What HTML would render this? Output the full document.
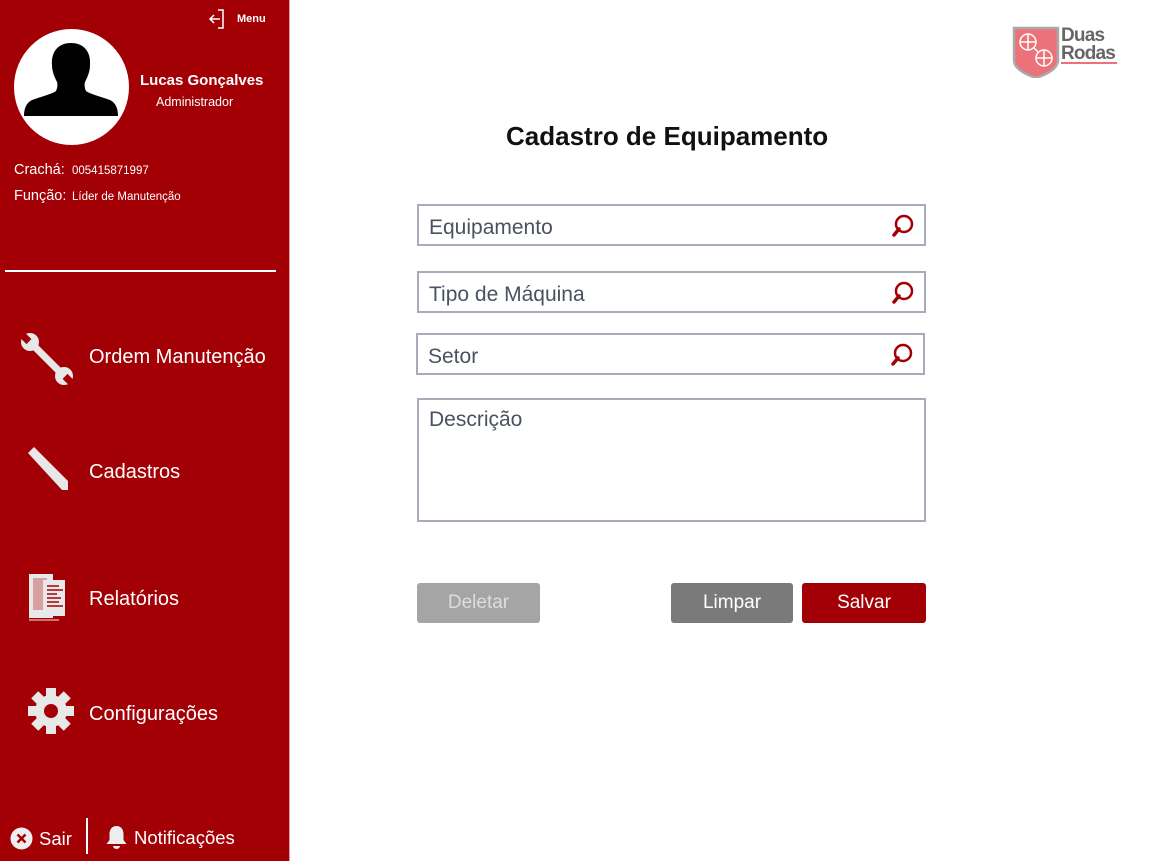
<!DOCTYPE html>
<html><head><meta charset="utf-8">
<style>
*{margin:0;padding:0;box-sizing:border-box}
body{width:1150px;height:861px;overflow:hidden;background:#fff;font-family:"Liberation Sans",sans-serif;position:relative}
.side{position:absolute;left:0;top:0;width:289px;height:861px;background:#a30006;color:#fff}
.abs{position:absolute}
.field{position:absolute;left:417px;width:509px;height:42px;border:2px solid #a7adb8;color:#4a5260;font-size:21px;padding:10px 10px 0}
.field svg{position:absolute;right:10px;top:7px}
.btn{position:absolute;top:583px;height:40px;border-radius:3px;color:#fff;font-size:19px;text-align:center;line-height:40px}
.nav{position:absolute;left:89px;font-size:20px;color:#fff}
</style></head><body>
<div class="side">
  <svg class="abs" style="left:207px;top:8px" width="20" height="22" viewBox="0 0 20 22"><path d="M11 2h5v18h-5" fill="none" stroke="#fff" stroke-width="1.5"/><path d="M13 11H3M7 7l-4 4 4 4" fill="none" stroke="#fff" stroke-width="1.5"/></svg>
  <div class="abs" style="left:237px;top:13px;font-size:11px;font-weight:bold">Menu</div>
  <div class="abs" style="left:14px;top:29px;width:115px;height:116px;border-radius:50%;background:#fff;overflow:hidden">
    <svg width="115" height="116" viewBox="0 0 115 116"><path d="M57 14c-13 0-20 9-19 22 0 7 3 13 5 17 1 3 0 7-1 9-4 3-16 6-24 9-6 3-8 9-8 16h94c0-7-2-13-8-16-8-3-20-6-24-9-1-2-2-6-1-9 2-4 5-10 5-17 1-13-6-22-19-22z" fill="#000"/></svg>
  </div>
  <div class="abs" style="left:140px;top:72px;font-size:15px;font-weight:bold">Lucas Gonçalves</div>
  <div class="abs" style="left:156px;top:95px;font-size:12.5px">Administrador</div>
  <div class="abs" style="left:14px;top:162px;font-size:14.5px">Crachá:</div>
  <div class="abs" style="left:72px;top:165px;font-size:11.5px">005415871997</div>
  <div class="abs" style="left:14px;top:188px;font-size:14.5px">Função:</div>
  <div class="abs" style="left:72px;top:191px;font-size:11.5px">Líder de Manutenção</div>
  <div class="abs" style="left:5px;top:270px;width:271px;height:2px;background:#fff"></div>

  <svg class="abs" style="left:20px;top:332px" width="55" height="55" viewBox="0 0 55 55">
    <defs><mask id="m"><rect width="55" height="55" fill="#fff"/><rect x="6" y="-2" width="7" height="11" fill="#000" transform="rotate(-45 10 10)"/><rect x="41" y="45" width="7" height="12" fill="#000" transform="rotate(-45 44 44)"/></mask></defs>
    <g fill="#e8e8e8" mask="url(#m)"><circle cx="10" cy="10" r="9"/><circle cx="44" cy="44" r="9"/><path d="M14 9l32 32-5 5L9 14z"/></g>
  </svg>
  <div class="nav" style="top:346px">Ordem Manutenção</div>

  <svg class="abs" style="left:24px;top:444px" width="46" height="46" viewBox="0 0 46 46"><path d="M4 9l6-6 34 34v9h-6z" fill="#e8e8e8"/></svg>
  <div class="nav" style="top:461px">Cadastros</div>

  <svg class="abs" style="left:27px;top:574px" width="48" height="48" viewBox="0 0 48 48"><rect x="2" y="0" width="24" height="44" fill="#e8e8e8"/><rect x="6" y="4" width="14" height="32" fill="#d7a0a0"/><rect x="16" y="6" width="22" height="36" fill="#e8e8e8"/><g stroke="#a30006" stroke-width="1.5"><path d="M20 12h12M20 16h16M20 20h10M20 24h14M20 28h12M20 32h16"/></g><path d="M2 46h30" stroke="#e8e8e8"/></svg>
  <div class="nav" style="top:588px">Relatórios</div>

  <svg class="abs" style="left:28px;top:688px" width="46" height="46" viewBox="0 0 46 46"><g fill="#e8e8e8" transform="translate(23 23)"><circle r="16"/><g id="t"><rect x="-5" y="-23" width="10" height="10"/></g><use href="#t" transform="rotate(45)"/><use href="#t" transform="rotate(90)"/><use href="#t" transform="rotate(135)"/><use href="#t" transform="rotate(180)"/><use href="#t" transform="rotate(225)"/><use href="#t" transform="rotate(270)"/><use href="#t" transform="rotate(315)"/></g><circle cx="23" cy="23" r="7" fill="#a30006"/></svg>
  <div class="nav" style="top:703px">Configurações</div>

  <svg class="abs" style="left:10px;top:827px" width="23" height="23" viewBox="0 0 23 23"><circle cx="11.5" cy="11.5" r="11" fill="#eee"/><path d="M7.5 7.5l8 8M15.5 7.5l-8 8" stroke="#a30006" stroke-width="2.5"/></svg>
  <div class="abs" style="left:39px;top:828px;font-size:18.5px">Sair</div>
  <div class="abs" style="left:86px;top:818px;width:2px;height:36px;background:#fff"></div>
  <svg class="abs" style="left:105px;top:825px" width="23" height="25" viewBox="0 0 23 25"><path d="M11.5 1c-5 0-7 4-7 8v6l-3 4h20l-3-4V9c0-4-2-8-7-8z" fill="#eee"/><path d="M8 21a3.5 3 0 007 0z" fill="#eee"/></svg>
  <div class="abs" style="left:134px;top:827px;font-size:18.5px">Notificações</div>
</div>
<div class="abs" style="left:289px;top:0;width:1px;height:861px;background:#d99"></div>

<svg class="abs" style="left:1012px;top:26px" width="50" height="52" viewBox="0 0 50 52"><path d="M2 2h44v32c0 8-10 14-22 18C12 48 2 42 2 34z" fill="#ec727a" stroke="#aaa" stroke-width="2.5"/><g fill="none" stroke="#fff" stroke-width="1.5"><circle cx="16" cy="16" r="8"/><circle cx="32" cy="32" r="8"/><path d="M16 8v16M8 16h16M32 24v16M24 32h16M22 22l4 4"/></g></svg>
<div class="abs" style="left:1061px;top:27px;font-size:19px;font-weight:bold;color:#666;line-height:18px;letter-spacing:-0.8px">Duas<br>Rodas</div>
<div class="abs" style="left:1061px;top:62px;width:56px;height:2px;background:#ec727a"></div>

<div class="abs" style="left:506px;top:121px;font-size:26px;font-weight:bold;color:#111">Cadastro de Equipamento</div>

<div class="field" style="top:204px">Equipamento<svg width="24" height="26" viewBox="0 0 24 26"><circle cx="14" cy="11" r="8" fill="none" stroke="#a30006" stroke-width="2.5"/><path d="M9 16l-5 6" stroke="#a30006" stroke-width="3.5" stroke-linecap="round"/></svg></div>
<div class="field" style="top:271px">Tipo de Máquina<svg width="24" height="26" viewBox="0 0 24 26"><circle cx="14" cy="11" r="8" fill="none" stroke="#a30006" stroke-width="2.5"/><path d="M9 16l-5 6" stroke="#a30006" stroke-width="3.5" stroke-linecap="round"/></svg></div>
<div class="field" style="top:333px;left:416px">Setor<svg width="24" height="26" viewBox="0 0 24 26"><circle cx="14" cy="11" r="8" fill="none" stroke="#a30006" stroke-width="2.5"/><path d="M9 16l-5 6" stroke="#a30006" stroke-width="3.5" stroke-linecap="round"/></svg></div>
<div class="field" style="top:398px;height:124px;padding-top:8px">Descrição</div>

<div class="btn" style="left:417px;width:123px;background:#a5a5a5;color:#ddd">Deletar</div>
<div class="btn" style="left:671px;width:122px;background:#7a7a7a">Limpar</div>
<div class="btn" style="left:802px;width:124px;background:#a30006">Salvar</div>
</body></html>
